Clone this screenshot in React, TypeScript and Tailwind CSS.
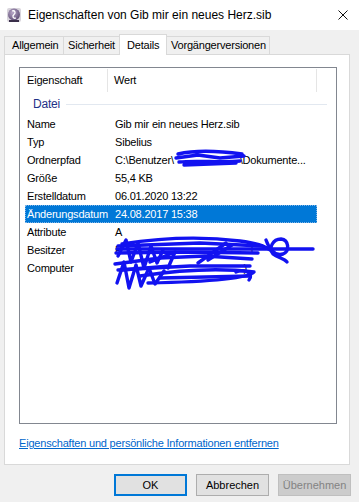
import React from "react";

const rows: { k: string; v: React.ReactNode; sel?: boolean }[] = [
  { k: "Name", v: "Gib mir ein neues Herz.sib" },
  { k: "Typ", v: "Sibelius" },
  {
    k: "Ordnerpfad",
    v: (
      <>
        C:\Benutzer\<span className="inline-block w-[66px]" />\Dokumente...
      </>
    ),
  },
  { k: "Größe", v: "55,4 KB" },
  { k: "Erstelldatum", v: "06.01.2020 13:22" },
  { k: "Änderungsdatum", v: "24.08.2017 15:38", sel: true },
  { k: "Attribute", v: "A" },
  { k: "Besitzer", v: "P                                             f" },
  { k: "Computer", v: "                                             )" },
];

function AppIcon() {
  return (
    <svg width="16" height="16" viewBox="0 0 16 16">
      <defs>
        <radialGradient id="g" cx="0.4" cy="0.35" r="0.7">
          <stop offset="0" stopColor="#b9a8c9" />
          <stop offset="1" stopColor="#5b4a72" />
        </radialGradient>
      </defs>
      <rect x="1" y="1" width="14" height="14" rx="2" fill="#d8d4dc" />
      <circle cx="8" cy="7.5" r="6" fill="url(#g)" />
      <path d="M6 4 C9 3, 10 6, 8 7.5 C6 9, 7 12, 10 11" stroke="#fff" strokeWidth="1.3" fill="none" />
      <rect x="3" y="13" width="10" height="2" fill="#3a2f4a" />
    </svg>
  );
}

export default function App() {
  return (
    <div className="relative w-[359px] h-[502px] bg-[#f0f0f0] overflow-hidden text-black [font-family:'Liberation_Sans',Arial,sans-serif] text-[11px] tracking-[-0.2px]">
      {/* Title bar */}
      <div className="h-[30px] bg-white flex items-center pl-[6px]">
        <AppIcon />
        <span className="ml-[6px] text-[12px] tracking-normal text-black">Eigenschaften von Gib mir ein neues Herz.sib</span>
        <div className="ml-auto mr-[11px] w-[10px] h-[10px]">
          <svg width="10" height="10" viewBox="0 0 10 10">
            <path d="M0.5 0.5 L9.5 9.5 M9.5 0.5 L0.5 9.5" stroke="#111" strokeWidth="1" />
          </svg>
        </div>
      </div>

      {/* Tabs */}
      <div className="h-[24px] flex items-end pl-[4px]">
        <div className="w-[60px] h-[18px] border border-b-0 border-[#d9d9d9] flex items-center pl-[7px]">Allgemein</div>
        <div className="w-[56px] h-[18px] border border-b-0 border-l-0 border-[#d9d9d9] flex items-center pl-[4px]">Sicherheit</div>
        <div className="relative w-[48px] h-[21px] -mb-px -ml-px z-10 bg-white border border-b-0 border-[#d9d9d9] flex items-start pt-[2px] pl-[7px]">Details</div>
        <div className="w-[103px] h-[18px] border border-b-0 border-l-0 border-[#d9d9d9] flex items-center pl-[4px]">Vorgängerversionen</div>
      </div>

      {/* Panel */}
      <div className="ml-[4px] w-[346px] h-[411px] bg-white border border-[#d9d9d9] pl-[14px] pt-[12px]">
        <div className="w-[318px] h-[357px] border border-[#828790] pl-[5px] pt-px">
          {/* header */}
          <div className="h-[24px] flex">
            <div className="w-[83px] h-[23px] border-r border-[#e5e5e5] flex items-center pl-[2px]">Eigenschaft</div>
            <div className="w-[209px] h-[23px] border-r border-[#e5e5e5] flex items-center pl-[6px]">Wert</div>
          </div>
          {/* group */}
          <div className="h-[22px] flex items-center">
            <span className="pl-[8px] text-[12px] text-[#1e3287]">Datei</span>
            <div className="ml-[6px] w-[261px] h-px bg-[#e2e8f0]" />
          </div>
          {rows.map((r) => (
            <div
              key={r.k}
              className={
                "h-[18px] w-[292px] flex items-center " +
                (r.sel ? "bg-[#0078d7] text-white outline-1 outline-dotted outline-[#7fb4e6] -outline-offset-1" : "")
              }
            >
              <div className="w-[90px] pl-[2px] whitespace-nowrap">{r.k}</div>
              <div className="whitespace-pre">{r.v}</div>
            </div>
          ))}
        </div>
        <div className="mt-[11px] text-[#0066cc] underline">Eigenschaften und persönliche Informationen entfernen</div>
      </div>

      {/* Buttons */}
      <div className="flex justify-end gap-[9px] pr-[8px] pt-[9px] tracking-normal">
        <button className="w-[73px] h-[22px] bg-[#e1e1e1] border-2 border-[#0078d7] text-black">OK</button>
        <button className="w-[73px] h-[22px] bg-[#e1e1e1] border border-[#adadad] text-black">Abbrechen</button>
        <button className="w-[73px] h-[22px] bg-[#cccccc] border border-[#bfbfbf] text-[#838383]">Übernehmen</button>
      </div>

      {/* Redaction scribbles */}
      <svg className="absolute left-0 top-0 pointer-events-none" width="359" height="502" viewBox="0 0 359 502">
        <g stroke="#1212f0" strokeWidth="3.4" fill="none" strokeLinecap="round" strokeLinejoin="round">
          <path d="M178 154 C195 150, 220 151, 242 154 M176 158 L198 155 L220 158 L244 156 M179 162 C196 160, 222 163, 240 161 M184 165 L236 163" />
          <path d="M117 249 L313 249" />
          <path d="M122 244 C160 238, 200 236, 240 241 C255 243, 265 246, 270 250" />
          <path d="M118 246 L200 243 L262 246" />
          <path d="M118 256 L126 240 L131 262 L138 243 L144 268 L151 246 L157 263 L163 250" />
          <path d="M115 264 L160 258 L205 256 L252 259" />
          <path d="M116 253 L180 252 L258 253" />
          <path d="M117 283 L124 262 L129 288 L136 265 L141 286 L149 268 L155 284 L164 271" />
          <path d="M140 276 C180 270, 222 268, 254 272 C248 279, 200 282, 148 283" />
          <path d="M118 270 L190 266 L250 266" />
          <path d="M266 240 C270 251, 276 256, 283 254 C290 251, 289 240, 281 239 C273 239, 268 248, 273 254 C278 258, 284 258, 287 262" />
          <path d="M198 263 L226 243 M208 260 L232 245" />
          <path d="M121 270 L170 266 M150 262 L175 252 L168 268" />
          <path d="M236 272 C246 268, 254 274, 249 280" />
          <path d="M160 278 L250 276" />
        </g>
      </svg>
    </div>
  );
}
